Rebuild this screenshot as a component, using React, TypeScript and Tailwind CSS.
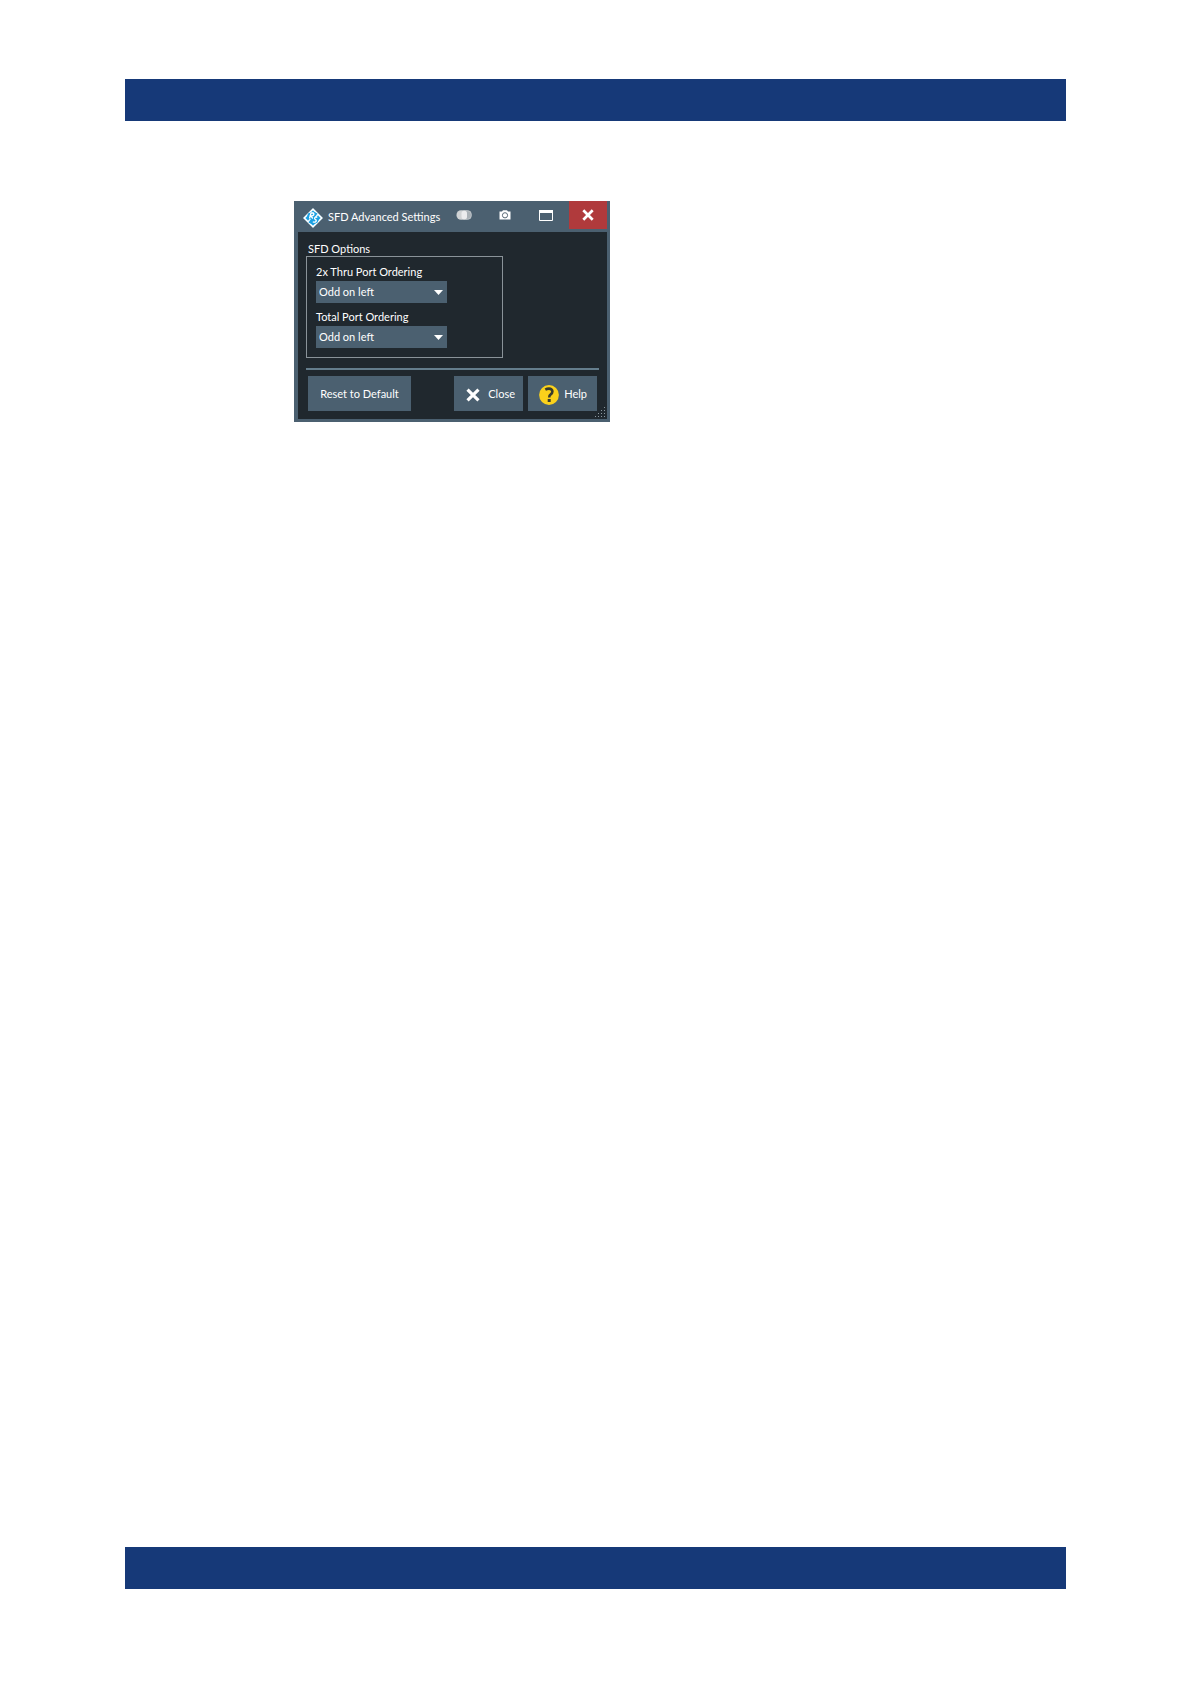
import React from "react";

function LogoIcon() {
  return (
    <svg width="20" height="20" viewBox="0 0 20 20" aria-hidden="true" className="shrink-0">
      <path d="M10 0 20 10 10 20 0 10Z" fill="#e6f7ff" />
      <path d="M5.500 5.500 10 1 14.500 5.500 19 10 14.500 14.500 10 19 5.500 14.500 1 10Z" fill="none" stroke="#fff" strokeWidth="1" />
      <path d="M5 5.500 10 3.200 14.500 5.500 12 9 16.500 10 14.500 14.500 10 16.800 5.500 14.500 8 11 3.500 10Z" fill="#1ba0e2" />
      <path d="M2.500 10 5 7.500 7.500 10 5 12.500Z M12.500 10 15 7.500 17.500 10 15 12.500Z M7.500 15 10 12.500 12.500 15 10 17.500Z M7.500 5 10 2.500 12.500 5 10 7.500Z" fill="#1ba0e2" />
      <path d="M6.500 10.500 8 5H9.800Q11.500 5.300 10.600 7Q9.800 8.100 7.800 7.800L9.800 10.500" fill="none" stroke="#fff" strokeWidth="1.300" />
      <path d="M14.300 9.300Q11.800 8.600 11.600 10.400Q11.800 11.500 13.200 12.200Q13.500 14.800 9.800 13.800" fill="none" stroke="#fff" strokeWidth="1.300" />
    </svg>
  );
}

function TransparencyIcon() {
  return (
    <svg width="16" height="10" viewBox="0 0 16 10" aria-hidden="true">
      <rect x="5" y="0.600" width="10.400" height="8.800" rx="4" fill="#a9b1b7" stroke="#c4cace" strokeWidth="0.800" />
      <rect x="0.500" y="0.300" width="10.500" height="9.400" rx="4.500" fill="#d0d3d5" />
      <rect x="5.500" y="0.800" width="5.500" height="8.400" rx="2.500" fill="#ebecee" />
    </svg>
  );
}

function CameraIcon() {
  return (
    <svg width="12" height="10" viewBox="0 0 12 10" aria-hidden="true">
      <path d="M0.500 1.500H3L4 0.300H8L9 1.500H11.500V9.500H0.500Z" fill="#fff" />
      <circle cx="6" cy="5.300" r="2.600" fill="#fff" stroke="#5b6b77" strokeWidth="1" />
    </svg>
  );
}

function WindowIcon() {
  return (
    <svg width="14" height="11" viewBox="0 0 14 11" aria-hidden="true">
      <path d="M0.500 1H13.500V10.500H0.500Z" fill="none" stroke="#fff" />
      <path d="M0 0H14V3H0Z" fill="#fff" />
    </svg>
  );
}

function CrossIcon({ size }: { size: number }) {
  return (
    <svg width={size} height={size} viewBox="0 0 12 12" aria-hidden="true" className="shrink-0">
      <path d="M1.300 1.300 10.700 10.700M10.700 1.300 1.300 10.700" stroke="#fff" strokeWidth="2.700" />
    </svg>
  );
}

function HelpIcon() {
  return (
    <svg width="20" height="20" viewBox="0 0 20 20" aria-hidden="true" className="shrink-0">
      <circle cx="10" cy="10" r="9.900" fill="#fbd11b" />
      <path d="M6.300 4.600Q8 3.600 10 3.600Q13.400 3.600 13.400 6.600Q13.400 8.200 11.700 9.400Q10.200 10.400 10.200 12.500" fill="none" stroke="#3a3c2c" strokeWidth="2.600" />
      <path d="M8.700 14H11.700V17H8.700Z" fill="#3a3c2c" />
    </svg>
  );
}

function ResizeGrip() {
  const dots = [[9, 0], [6, 3], [9, 3], [3, 6], [6, 6], [9, 6], [0, 9], [3, 9], [6, 9], [9, 9]];
  return (
    <svg width="11" height="11" viewBox="0 0 11 11" aria-hidden="true" className="absolute right-px bottom-px">
      {dots.map(([x, y]) => (
        <rect key={`${x}-${y}`} x={x} y={y} width="1" height="1" fill="#8c979e" />
      ))}
    </svg>
  );
}

function OrderingField({ id, label }: { id: string; label: string }) {
  return (
    <div className="flex flex-col">
      <label htmlFor={id} className="h-[18px] leading-[18px]">{label}</label>
      <div className="relative w-[131px]">
        <select id={id} className="block h-[22px] w-full appearance-none bg-[#4b6070] px-[3px]">
          <option>Odd on left</option>
          <option>Even on left</option>
        </select>
        <svg width="9" height="5" viewBox="0 0 9 5" aria-hidden="true" className="pointer-events-none absolute top-[9px] right-1">
          <path d="M0 0H9L4.500 5Z" fill="#fff" />
        </svg>
      </div>
    </div>
  );
}

function AdvancedSettingsDialog() {
  return (
    <section
      role="dialog"
      aria-labelledby="dialog-title"
      className="flex w-[316px] flex-col border-r-[3px] border-b-[3px] border-l-4 border-[#4b6070] bg-[#20282e] font-['Lato',sans-serif] text-[11px] text-white"
    >
      <header className="flex h-[31px] items-start bg-[#4b6070] pl-[5px]">
        <div className="flex h-full flex-1 items-center gap-[5px] pt-0.5">
          <LogoIcon />
          <h1 id="dialog-title" className="whitespace-nowrap">SFD Advanced Settings</h1>
        </div>
        <button type="button" aria-label="Transparency" className="flex h-7 w-[41px] items-center justify-center"><TransparencyIcon /></button>
        <button type="button" aria-label="Screenshot" className="flex h-7 w-[41px] items-center justify-center"><CameraIcon /></button>
        <button type="button" aria-label="Maximize" className="mr-0.5 flex h-7 w-[42px] items-center justify-center"><WindowIcon /></button>
        <button type="button" aria-label="Close window" className="flex h-7 w-[38px] items-center justify-center bg-[#b03a3c]"><CrossIcon size={12} /></button>
      </header>
      <div className="relative flex flex-col px-2 pt-2 pb-2">
        <h2 id="options-title" className="pl-0.5 leading-[18px] -mb-0.5">SFD Options</h2>
        <div role="group" aria-labelledby="options-title" className="flex w-[197px] flex-col gap-[5px] border border-[#8a9399] px-[9px] pt-1.5 pb-[9px]">
          <OrderingField id="thru-ordering" label="2x Thru Port Ordering" />
          <OrderingField id="total-ordering" label="Total Port Ordering" />
        </div>
        <hr className="mt-2.5 border-t-2 border-[#647d8c]" />
        <div className="flex gap-[5px] px-0.5 pt-1.5">
          <button type="button" className="mr-auto h-[35px] w-[103px] bg-[#4b6070] pt-0.5">Reset to Default</button>
          <button type="button" className="flex h-[35px] w-[69px] items-center justify-end gap-2 bg-[#4b6070] pt-0.5 pr-2"><CrossIcon size={14} />Close</button>
          <button type="button" className="flex h-[35px] w-[69px] items-center justify-end gap-[5px] bg-[#4b6070] pt-0.5 pr-2.5"><HelpIcon />Help</button>
        </div>
        <ResizeGrip />
      </div>
    </section>
  );
}

export default function App() {
  return (
    <div className="flex min-h-screen flex-col bg-white px-[125px] pt-[79px] pb-[95px]">
      <div className="h-[42px] bg-[#163978]" />
      <main className="flex-1 pt-20 pl-[169px]">
        <AdvancedSettingsDialog />
      </main>
      <div className="h-[42px] bg-[#163978]" />
    </div>
  );
}
